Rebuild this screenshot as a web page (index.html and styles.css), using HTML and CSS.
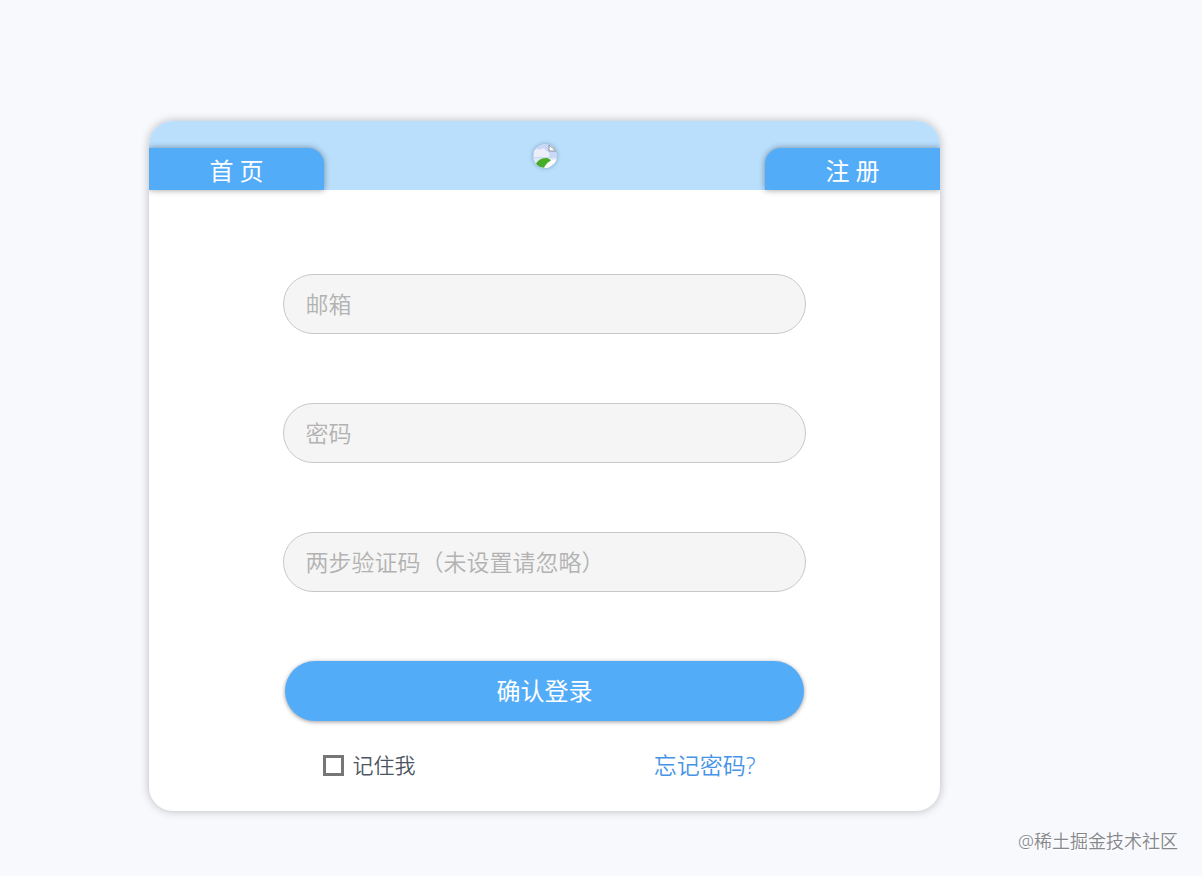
FILE: index.html
```html
<!DOCTYPE html>
<html lang="zh-CN">
<head>
    <meta charset="UTF-8">
    <meta name="viewport" content="width=device-width, initial-scale=1.0">
    <title>登录</title>
    <link rel="stylesheet" href="styles.css">
</head>
<body>
    <main class="login-card">
        <header class="card-header">
            <a class="tab tab-home" href="#">首 页</a>
            <svg class="logo" viewBox="0 0 24 24" role="img" aria-label="logo">
                <defs>
                    <clipPath id="logoClip"><circle cx="12" cy="12" r="12"/></clipPath>
                </defs>
                <g clip-path="url(#logoClip)">
                    <path d="M0 0h17l7 7v17H0z" fill="#c9d8f6"/>
                    <path d="M1 13V7c2-3 5-2 6-1 2-3 6-2 6 1 3 0 4 3 3 6z" fill="#eceffb"/>
                    <path d="M0 14h24v10H0z" fill="#dfe6f8"/>
                    <path d="M2 23c1-6 6-9 11-9 3 0 5 2 5 4l-6 6z" fill="#45ad27"/>
                    <path d="M11 24c2-5 6-8 13-9v3c-4 1-6 3-8 6z" fill="#fff"/>
                    <path d="M16 0v7h8z" fill="#fff"/>
                    <path d="M16 1v6h7M16 1l7 6" fill="none" stroke="#8d9099"/>
                </g>
            </svg>
            <a class="tab tab-register" href="#">注 册</a>
        </header>
        <form class="login-form">
            <input class="field" type="email" name="email" placeholder="邮箱" aria-label="邮箱">
            <input class="field" type="password" name="password" placeholder="密码" aria-label="密码" autocomplete="off">
            <input class="field" type="text" name="code" placeholder="两步验证码（未设置请忽略）" aria-label="两步验证码">
            <button class="submit" type="submit">确认登录</button>
            <div class="options">
                <label class="remember" for="remember">
                    <input class="checkbox" type="checkbox" id="remember" name="remember">
                    记住我
                </label>
                <a class="forgot" href="#">忘记密码?</a>
            </div>
        </form>
    </main>
    <footer class="watermark">@稀土掘金技术社区</footer>
</body>
</html>
```
FILE: styles.css
```css
* {
    box-sizing: border-box;
}
body {
    margin: 0;
    padding-top: 121px;
    background-color: #f7f9fd;
    font-family: "Noto Sans", "Noto Sans CJK SC", sans-serif;
}
.login-card {
    margin: 0 262px 0 149px;
    background-color: #fff;
    border-radius: 24px;
    box-shadow: 0 0 10px rgba(0, 0, 0, 0.26);
}
.card-header {
    display: flex;
    justify-content: space-between;
    align-items: center;
    height: 69px;
    background-color: #b9dffd;
    border-radius: 24px 24px 0 0;
}
.tab {
    align-self: flex-end;
    width: 175px;
    height: 42px;
    padding-top: 2px;
    background-color: #53acf8;
    color: #fff;
    font-size: 24px;
    line-height: 42px;
    text-align: center;
    text-decoration: none;
    box-shadow: 0 0 6px rgba(0, 0, 0, 0.4);
    /* keep the shadow inside the outer edge of the card */
    clip-path: inset(-8px -8px -8px 0);
}
.tab-home {
    border-radius: 0 16px 0 0;
}
.tab-register {
    border-radius: 16px 0 0 0;
    clip-path: inset(-8px 0 -8px -8px);
}
.logo {
    width: 24px;
    height: 24px;
    border-radius: 50%;
    box-shadow: 0 0 4px rgba(0, 0, 0, 0.3);
}
.login-form {
    display: flex;
    flex-direction: column;
    align-items: center;
    padding: 84px 0 30px;
}
.field {
    width: 66%;
    height: 60px;
    margin-bottom: 69px;
    padding: 0 21px;
    border: 1px solid #c8c8c8;
    border-radius: 30px;
    background-color: #f5f5f5;
    color: #555;
    font-family: inherit;
    font-size: 23px;
    font-weight: 350;
}
.field::placeholder {
    color: #b2b2b2;
}
.submit {
    width: calc(66% - 4px);
    height: 60px;
    padding: 0 0 4px;
    border: none;
    border-radius: 30px;
    background-color: #53acf8;
    color: #fff;
    font-family: inherit;
    font-size: 24px;
    box-shadow: 0 1px 4px rgba(0, 0, 0, 0.4);
    cursor: pointer;
}
.options {
    display: flex;
    justify-content: space-between;
    align-items: center;
    width: 66%;
    margin-top: 28px;
    padding: 0 50px 0 40px;
    line-height: 32px;
    font-weight: 350;
}
.remember {
    display: flex;
    align-items: center;
    gap: 8px;
    color: #4c5563;
    font-size: 21px;
}
.checkbox {
    appearance: none;
    width: 21px;
    height: 21px;
    margin: 0;
    border: 3px solid #767676;
    background-color: #fff;
}
.checkbox:checked {
    background-color: #53acf8;
}
.forgot {
    color: #4693e6;
    font-size: 23px;
    text-decoration: none;
}
.watermark {
    padding: 17px 24px 0 0;
    color: #85878b;
    font-size: 18px;
    font-weight: 350;
    line-height: 26px;
    text-align: right;
    text-shadow: 1px 1px 0 #fff;
}
```
